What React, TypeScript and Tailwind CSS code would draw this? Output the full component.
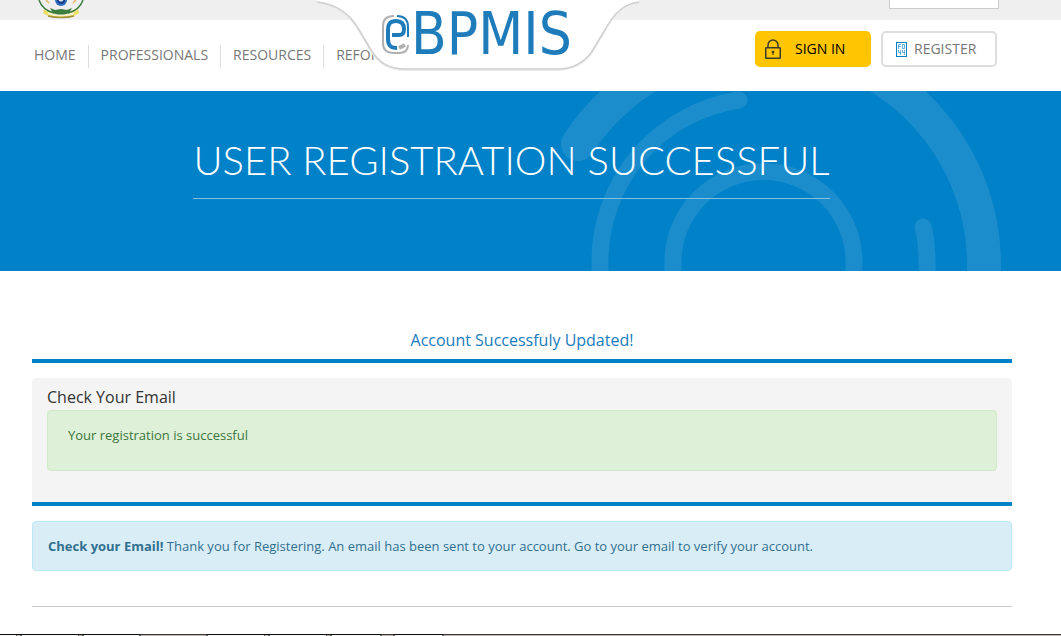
const navItems = ["HOME", "PROFESSIONALS", "RESOURCES", "REFORM"];

function Emblem() {
  return (
    <svg viewBox="0 0 48 20" className="h-5 w-12" role="img" aria-label="Coat of arms">
      <circle cx="24" cy="0" r="6" fill="#2f6fc0" />
      <circle cx="24" cy="0" r="4" fill="#1b3f8c" />
      <circle cx="24" cy="-1" r="2.5" fill="#dceaf7" />
      <path d="M9 0l3 3M39 0l-3 3" stroke="#e6b65a" strokeWidth="1.5" />
      <path d="M7 9c3 5 31 5 34 0l1 4-3 2c-8 4-22 4-30 0l-3-2z" fill="#efdf62" />
      <path d="M11 13c6 3 20 3 26 0" fill="none" stroke="#f4f0d0" strokeWidth="2" />
      <path d="M2 0C4 6 9 11 17 13M46 0C44 6 39 11 31 13" fill="none" stroke="#3b7d3e" strokeWidth="1.5" />
      <path d="M13 8l5 2 6-1 6 1 5-2-3 5c-5 2-11 2-16 0z" fill="#3b7d3e" />
      <path d="M11 16c7 2 19 2 26 0" fill="none" stroke="#a0923a" strokeWidth="1.5" />
    </svg>
  );
}

function Logo() {
  return (
    <svg viewBox="0 0 324 74" className="h-[74px] w-[324px]" role="img" aria-label="eBPMIS">
      <path
        d="M1 2C20 4 33 13 42 28L55 50C63 63 73 69 90 69H242C257 69 267 63 275 53L290 28C299 12 308 4 323 2V0H1Z"
        fill="#fff"
      />
      <path
        d="M1 3C20 5 33 14 42 29L55 51C63 64 73 70 90 70H242C257 70 267 64 275 54L290 29C299 13 308 5 323 3"
        fill="none"
        stroke="#ececec"
        strokeWidth="2"
      />
      <path
        d="M1 2C20 4 33 13 42 28L55 50C63 63 73 69 90 69H242C257 69 267 63 275 53L290 28C299 12 308 4 323 2"
        fill="none"
        stroke="#d0d0d0"
        strokeWidth="1.5"
      />
      <g fill="none" strokeLinecap="butt">
        <path d="M78 16C70 16 67 20 67 26V43C67 50 71 53 78 53H83C89 53 92 50 92 45" stroke="#b0b0b0" strokeWidth="2" />
        <path d="M81 16C89 16 92 20 92 27V37" stroke="#1f7cbb" strokeWidth="2" />
        <path
          d="M76 35H83C87 35 88 33 88 29C88 24 86 21 80 21C74 21 72 24 72 30V39C72 45 74 48 81 48"
          stroke="#1f7cbb"
          strokeWidth="4"
        />
        <path d="M83 48L89 45" stroke="#b0b0b0" strokeWidth="4" />
      </g>
      <text
        x="95"
        y="54"
        fill="#1f7cbb"
        fontSize="58"
        className="font-['DejaVu_Sans_Condensed','DejaVu_Sans',sans-serif]"
      >
        BPMIS
      </text>
    </svg>
  );
}

function LockIcon() {
  return (
    <svg viewBox="0 0 16 20" className="h-5 w-4" fill="none" stroke="#3d3a2c" aria-hidden="true">
      <rect x="0.75" y="8.75" width="14.5" height="10.5" rx="0.5" strokeWidth="1.5" />
      <path d="M3 8.5V6a5 5 0 0 1 10 0v2.5" strokeWidth="1.5" />
      <circle cx="8" cy="13" r="1" strokeWidth="1" fill="#3d3a2c" />
      <path d="M8 13v3" strokeWidth="1" />
    </svg>
  );
}

function CodeBoxIcon() {
  return (
    <svg viewBox="0 0 11 15" className="h-[15px] w-[11px]" fill="none" stroke="#0081c8" aria-hidden="true">
      <rect x="0.5" y="0.5" width="10" height="14" />
      <path d="M2.5 7V2.5H5M2.5 4.5H5M6.5 2.5h2v4h-2zM2.5 8v2.5h2M4.5 8v5M6.5 8v2.5h2M8.5 8v5" opacity=".6" />
    </svg>
  );
}

function Rings() {
  return (
    <svg
      viewBox="0 0 521 180"
      className="pointer-events-none absolute top-0 left-[540px] h-[180px] w-[521px]"
      fill="none"
      stroke="#1b8dcd"
      strokeLinecap="round"
      aria-hidden="true"
    >
      <path d="M38 53A221 221 0 0 1 444 171V190" strokeWidth="34" />
      <path d="M60 190V171A163 163 0 0 1 199 9" strokeWidth="17" />
      <path d="M133 190V171A90 90 0 0 1 314 171V190" strokeWidth="17" />
      <path d="M383 136Q388 153 387 190" strokeWidth="17" />
    </svg>
  );
}

function FooterEdge() {
  return (
    <svg viewBox="0 0 453 2" className="h-[2px] w-[453px]" shapeRendering="crispEdges" aria-hidden="true">
      <path d="M0 .5h140M207 .5h174M394 .5h49" stroke="#111" />
      <path d="M0 1.5h16M22 1.5h56M84 1.5h55M208 1.5h56M270 1.5h56M332 1.5h48M395 1.5h47" stroke="#f4f4f4" />
      <path d="M16 1.5h1M20 1.5h2M78 1.5h1M82 1.5h2M139 1.5h2M206 1.5h2M264 1.5h1M268 1.5h2M326 1.5h1M330 1.5h2M380 1.5h2M393 1.5h2M442 1.5h2" stroke="#666" />
    </svg>
  );
}

export default function App() {
  return (
    <div className="min-h-screen overflow-x-hidden bg-white font-['Open_Sans',sans-serif] text-[#333]">
      <header className="relative">
        <div className="flex h-5 items-start justify-between overflow-hidden bg-[#efefef] pr-[62px] pl-[37px]">
          <Emblem />
          <input
            type="search"
            aria-label="Search"
            className="-mt-[25px] h-[34px] w-[110px] border border-[#ccc] bg-white px-2 text-sm"
          />
        </div>
        <div className="flex h-[71px] items-start justify-between pr-16 pl-[34px]">
          <nav className="pt-[25px]">
            <ul className="flex text-sm leading-[19px] text-[#777]">
              {navItems.map((item) => (
                <li key={item} className="mr-3 border-r border-[#ddd] pr-3 pb-1 last:border-0">
                  <a href="#">{item}</a>
                </li>
              ))}
            </ul>
          </nav>
          <div className="flex gap-[10px] pt-[11px] text-sm">
            <button type="button" className="flex h-9 w-[116px] items-center gap-[14px] rounded-[5px] bg-[#ffc600] pl-[10px] text-black">
              <LockIcon />
              SIGN IN
            </button>
            <button
              type="button"
              className="flex h-9 w-[116px] items-center gap-[7px] rounded-[5px] border-2 border-[#ddd] bg-white pl-[13px] text-[#777]"
            >
              <CodeBoxIcon />
              REGISTER
            </button>
          </div>
        </div>
        <a href="#" className="absolute top-0 left-[316px]">
          <Logo />
        </a>
      </header>

      <section className="relative flex h-[180px] justify-center overflow-hidden bg-[#0081c8] pr-[38px]">
        <Rings />
        <h1 className="relative mt-10 h-[68px] border-b border-[#80c0e3] font-['Lato',sans-serif] text-[40px] leading-[58px] font-light whitespace-nowrap text-white">
          USER REGISTRATION SUCCESSFUL
        </h1>
      </section>

      <main className="pt-[57px] pr-[49px] pl-8">
        <h2 className="border-b-4 border-[#0081c8] pb-[7px] text-center text-base leading-6 text-[#1a7bbd]">
          Account Successfuly Updated!
        </h2>
        <section className="mt-[15px] h-32 rounded-t border-b-4 border-[#0081c8] bg-[#f4f4f4] px-[15px] pt-[7px]">
          <h3 className="text-base leading-[25px]">Check Your Email</h3>
          <div className="h-[61px] rounded border border-[#d0e9c6] bg-[#dff0d8] px-5 pt-[15px] text-[13px] leading-[18px] text-[#3c763d]">
            Your registration is successful
          </div>
        </section>
        <p className="mt-[15px] rounded border border-[#bce8f1] bg-[#d9edf7] px-[15px] py-[15px] text-[13px] leading-[18px] text-[#31708f]">
          <strong>Check your Email!</strong> Thank you for Registering. An email has been sent to your account. Go to your
          email to verify your account.
        </p>
        <hr className="mt-[35px] border-[#ccc]" />
      </main>
      <footer className="mt-[27px] flex h-[2px] overflow-hidden bg-linear-to-b from-[#3a3636] from-50% to-[#c0b9b5] to-50%">
        <FooterEdge />
      </footer>
    </div>
  );
}
